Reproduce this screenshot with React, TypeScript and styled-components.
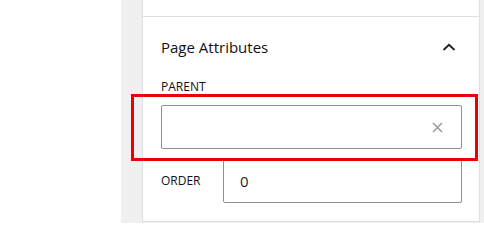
import React from 'react'
import styled, { createGlobalStyle } from 'styled-components'

const GlobalStyle = createGlobalStyle`
  html, body {
    margin: 0;
    padding: 0;
    background: #ffffff;
    font-family: 'Open Sans', 'Noto Sans', sans-serif;
    color: #1e1e1e;
  }
`

const Page = styled.div`
  position: relative;
  display: flex;
  width: 484px;
  height: 223px;
  overflow: hidden;
  background: #f0f0f0;
`

const Canvas = styled.div`
  width: 121px;
  background: #ffffff;
`

const Gutter = styled.div`
  width: 21px;
  background: #f0f0f0;
`

const Sidebar = styled.aside`
  width: 338px;
  align-self: flex-start;
  background: #ffffff;
  border-left: 1px solid #e0e0e0;
  border-right: 1px solid #e0e0e0;
  box-sizing: border-box;
`

const PrevPanel = styled.div`
  height: 16px;
  border-bottom: 1px solid #e0e0e0;
`

const Panel = styled.section`
  padding: 0 17px 18px 18px;
  border-bottom: 1px solid #e0e0e0;
`

const PanelHeader = styled.div`
  display: flex;
  align-items: center;
  justify-content: space-between;
  height: 60px;
  padding-bottom: 1px;
`

const PanelTitle = styled.h2`
  margin: 0;
  font-size: 15px;
  font-weight: 400;
  color: #111111;
`

const Toggle = styled.button`
  display: flex;
  align-items: center;
  justify-content: center;
  width: 24px;
  height: 24px;
  margin-right: 1px;
  padding: 0;
  border: 0;
  background: none;
  color: #1e1e1e;
`

const Label = styled.label<{ inline?: boolean }>`
  display: block;
  flex: ${p => (p.inline ? '0 0 62px' : 'none')};
  font-size: 12px;
  line-height: 18px;
  text-transform: uppercase;
  color: #111111;
  margin-bottom: ${p => (p.inline ? '0' : '9px')};
`

const Field = styled.div`
  display: flex;
  align-items: center;
  height: 44px;
  box-sizing: border-box;
  border: 1px solid #8f8f8f;
  border-radius: 2px;
  padding: 0 16px;
  flex: 1;
  font-size: 15px;
`

const ClearButton = styled.span`
  margin-left: auto;
  margin-right: 2px;
  display: flex;
  color: #9a9a9a;
`

const Row = styled.div`
  display: flex;
  align-items: center;
  margin-top: 10px;
`

const Highlight = styled.div`
  position: absolute;
  left: 131px;
  top: 94px;
  width: 347px;
  height: 67px;
  box-sizing: border-box;
  border: 3px solid #ee0000;
  pointer-events: none;
`

export default function App() {
  return (
    <>
      <GlobalStyle />
      <Page>
        <Canvas />
        <Gutter />
        <Sidebar>
          <PrevPanel />
          <Panel>
            <PanelHeader>
              <PanelTitle>Page Attributes</PanelTitle>
              <Toggle aria-label="Collapse">
                <svg width="14" height="8" viewBox="0 0 14 8" fill="none">
                  <path d="M1.5 7 L7 1.8 L12.5 7" stroke="currentColor" strokeWidth="1.8" />
                </svg>
              </Toggle>
            </PanelHeader>
            <Label>Parent</Label>
            <Field>
              <ClearButton>
                <svg width="11" height="11" viewBox="0 0 11 11" fill="none">
                  <path d="M1 1 L10 10 M10 1 L1 10" stroke="currentColor" strokeWidth="1.5" />
                </svg>
              </ClearButton>
            </Field>
            <Row>
              <Label inline>Order</Label>
              <Field>0</Field>
            </Row>
          </Panel>
        </Sidebar>
        <Highlight />
      </Page>
    </>
  )
}
